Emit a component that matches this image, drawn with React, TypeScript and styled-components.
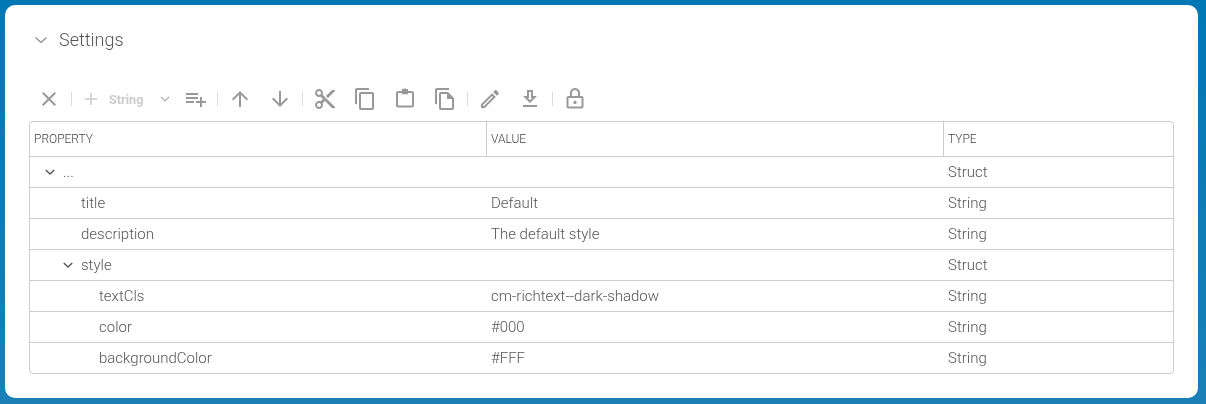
import React from "react";
import styled, { createGlobalStyle } from "styled-components";

const Global = createGlobalStyle`
  html, body { margin: 0; padding: 0; }
  body { font-family: Roboto, "Liberation Sans", sans-serif; }
`;

const Page = styled.div`
  width: 1206px; height: 404px; box-sizing: border-box; padding: 5px 8px 6px 5px;
  background: linear-gradient(180deg, #0077b5 0%, #1a80b5 100%);
`;
const Panel = styled.div`
  height: 393px; box-sizing: border-box; background: #fff; border-radius: 10px;
  padding: 0 24px 0 24px; display: flex; flex-direction: column;
  will-change: transform;
`;
const Heading = styled.div`
  display: flex; align-items: center; height: 22px; margin-top: 23px; color: #555;
  font-size: 18px; font-weight: 300;
`;
const Chevron = styled.svg`
  width: 14px; height: 14px; margin: 1px 11px 0 5px; flex: none;
`;
const Toolbar = styled.div`
  display: flex; align-items: center; height: 30px; margin-top: 34px; margin-bottom: 7px;
`;
const IconSlot = styled.span<{ $w?: number; $faint?: boolean }>`
  display: flex; align-items: center; justify-content: center; width: ${(p) => p.$w ?? 40}px; height: 30px;
  color: ${(p) => (p.$faint ? "#ccc" : "#999")}; flex: none;
`;
const Divider = styled.span`
  width: 1px; height: 14px; background: #ddd; flex: none; margin: 0 2px;
`;
const AddLabel = styled.span`
  font-size: 12.7px; font-weight: 700; color: #ccc; width: 49px; margin-left: 1px; flex: none;
`;
const MenuCaret = styled.span`
  display: flex; align-items: center; justify-content: center; width: 14px; margin-right: 4px; flex: none;
`;
const Table = styled.div`
  width: 1145px; height: 253px; box-sizing: border-box; border: 1px solid #ccc; border-radius: 4px;
  display: flex; flex-direction: column; color: #555;
`;
const HeaderRow = styled.div`
  display: grid; grid-template-columns: 456px 457px 1fr; height: 35px; box-sizing: border-box;
  border-bottom: 1px solid #ccc; flex: none;
`;
const HeaderCell = styled.div<{ $rule?: boolean }>`
  display: flex; align-items: center; padding-left: 4px; font-size: 12px; font-weight: 300; color: #444;
  border-left: ${(p) => (p.$rule ? "1px solid #ccc" : "none")};
`;
const Row = styled.div<{ $last?: boolean }>`
  display: grid; grid-template-columns: 456px 457px 1fr; height: ${(p) => (p.$last ? 30 : 31)}px; box-sizing: border-box; flex: none;
  border-bottom: ${(p) => (p.$last ? "none" : "1px solid #ccc")};
  font-size: 15px; font-weight: 300;
`;
const NameCell = styled.div<{ $depth: number }>`
  display: flex; align-items: center; padding-left: ${(p) => 15 + p.$depth * 18}px;
`;
const Cell = styled.div`
  display: flex; align-items: center; padding-left: 5px;
`;
const Toggle = styled.svg`
  width: 10px; height: 10px; flex: none; margin-right: 8px;
`;
const Spacer = styled.span`
  width: 18px; flex: none;
`;

const P = ({ d }: { d: string }) => (
  <svg width={24} height={24} viewBox="0 0 24 24" fill="currentColor"><path d={d} /></svg>
);

const rows = [
  { n: "...", v: "", t: "Struct", d: 0, o: true },
  { n: "title", v: "Default", t: "String", d: 1 },
  { n: "description", v: "The default style", t: "String", d: 1 },
  { n: "style", v: "", t: "Struct", d: 1, o: true },
  { n: "textCls", v: "cm-richtext--dark-shadow", t: "String", d: 2 },
  { n: "color", v: "#000", t: "String", d: 2 },
  { n: "backgroundColor", v: "#FFF", t: "String", d: 2 },
];

export default function App() {
  return (
    <Page>
      <Global />
      <Panel>
        <Heading>
          <Chevron viewBox="0 0 14 14"><path d="M1.5 4.500 7 9.500l5.500-5" fill="none" stroke="#888" strokeWidth="1.1" /></Chevron>
          Settings
        </Heading>
        <Toolbar>
          <IconSlot><P d="M19 6.41L17.59 5 12 10.59 6.41 5 5 6.41 10.59 12 5 17.59 6.41 19 12 13.41 17.59 19 19 17.59 13.41 12z" /></IconSlot>
          <Divider />
          <IconSlot $w={34} $faint><P d="M18 12.8h-5.2V18h-1.6v-5.2H6v-1.6h5.2V6h1.6v5.2H18z" /></IconSlot>
          <AddLabel>String</AddLabel>
          <MenuCaret><svg width="10" height="10" viewBox="0 0 10 10"><path d="M1 3l4 4 4-4" fill="none" stroke="#aaa" strokeWidth="1.1" /></svg></MenuCaret>
          <IconSlot $w={39}><P d="M14 10H2v2h12v-2zm0-4H2v2h12V6zm4 8v-4h-2v4h-4v2h4v4h2v-4h4v-2h-4zM2 16h8v-2H2v2z" /></IconSlot>
          <Divider />
          <IconSlot><P d="M4 12l1.41 1.41L11 7.83V20h2V7.83l5.58 5.59L20 12l-8-8-8 8z" /></IconSlot>
          <IconSlot><P d="M20 12l-1.41-1.41L13 16.17V4h-2v12.17l-5.58-5.59L4 12l8 8 8-8z" /></IconSlot>
          <Divider />
          <IconSlot><P d="M9.64 7.64c.23-.5.36-1.05.36-1.64 0-2.21-1.79-4-4-4S2 3.79 2 6s1.79 4 4 4c.59 0 1.14-.13 1.64-.36L10 12l-2.36 2.36C7.14 14.13 6.59 14 6 14c-2.21 0-4 1.79-4 4s1.79 4 4 4 4-1.79 4-4c0-.59-.13-1.14-.36-1.64L12 14l7 7h3v-1L9.64 7.64zM6 8c-1.1 0-2-.89-2-2s.9-2 2-2 2 .89 2 2-.9 2-2 2zm0 12c-1.1 0-2-.89-2-2s.9-2 2-2 2 .89 2 2-.9 2-2 2zm6-7.5c-.28 0-.5-.22-.5-.5s.22-.5.5-.5.5.22.5.5-.22.5-.5.5zM19 3l-6 6 2 2 7-7V3z" /></IconSlot>
          <IconSlot><P d="M16 1H4c-1.1 0-2 .9-2 2v14h2V3h12V1zm3 4H8c-1.1 0-2 .9-2 2v14c0 1.1.9 2 2 2h11c1.1 0 2-.9 2-2V7c0-1.1-.9-2-2-2zm0 16H8V7h11v14z" /></IconSlot>
          <IconSlot><P d="M5 4h4V2h1.800a1.300 1.300 0 0 1 2.400 0H15v2h4a2 2 0 0 1 2 2v12.500a2 2 0 0 1-2 2H5a2 2 0 0 1-2-2V6a2 2 0 0 1 2-2zm0 2v12.500h14V6h-4v1.200H9V6H5z" /></IconSlot>
          <IconSlot><P d="M16 1H4c-1.1 0-2 .9-2 2v14h2V3h12V1zm-1 4H8c-1.1 0-2 .9-2 2v14c0 1.1.9 2 2 2h11c1.1 0 2-.9 2-2V11l-6-6zM8 21V7h6v5h5v9H8z" /></IconSlot>
          <Divider />
          <IconSlot><P d="M3 17.25V21h3.75L17.81 9.94l-3.75-3.75L3 17.25zM5.92 19H5v-.92l9.06-9.06.92.92L5.92 19zM20.71 7.04a1 1 0 0 0 0-1.41l-2.34-2.34a1 1 0 0 0-1.41 0l-1.83 1.83 3.75 3.75 1.83-1.83z" /></IconSlot>
          <IconSlot><P d="M19 9h-4V3H9v6H5l7 7 7-7zM11 11V5h2v6h1.17L12 13.17 9.83 11H11zM5 18h14v2H5z" /></IconSlot>
          <Divider />
          <IconSlot><P d="M18.500 9H17V6c0-2.800-2.200-5-5-5S7 3.200 7 6v3H5.500c-1.100 0-2 .9-2 2v8.500c0 1.100.9 2 2 2h13c1.100 0 2-.9 2-2V11c0-1.100-.9-2-2-2zM9 6c0-1.700 1.300-3 3-3s3 1.300 3 3v3H9V6zm9.500 13.500h-13V11h13v8.500zM12 17c.9 0 1.600-.7 1.600-1.600s-.7-1.600-1.600-1.600-1.600.7-1.600 1.600.7 1.600 1.600 1.600z" /></IconSlot>
        </Toolbar>
        <Table>
          <HeaderRow>
            <HeaderCell>PROPERTY</HeaderCell>
            <HeaderCell $rule>VALUE</HeaderCell>
            <HeaderCell $rule>TYPE</HeaderCell>
          </HeaderRow>
          {rows.map((r, i) => (
            <Row key={i} $last={i === rows.length - 1}>
              <NameCell $depth={r.d}>
                {r.o ? (
                  <Toggle viewBox="0 0 10 10"><path d="M.8 3 5 7l4.2-4" fill="none" stroke="#555" strokeWidth="1.4" /></Toggle>
                ) : (
                  <Spacer />
                )}
                {r.n}
              </NameCell>
              <Cell>{r.v}</Cell>
              <Cell>{r.t}</Cell>
            </Row>
          ))}
        </Table>
      </Panel>
    </Page>
  );
}
